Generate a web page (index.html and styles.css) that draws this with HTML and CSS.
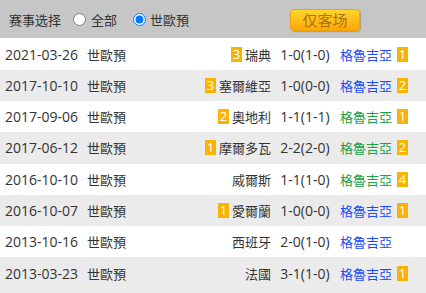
FILE: index.html
```html
<!DOCTYPE html>
<html lang="zh">
<head>
<meta charset="utf-8">
<link rel="stylesheet" href="styles.css">
</head>
<body>
<div class="bar">
  <span class="bar-label">赛事选择</span>
  <label class="opt"><input type="radio" name="m"><span>全部</span></label>
  <label class="opt opt2"><input type="radio" name="m" checked><span>世歐預</span></label>
  <button class="btn">仅客场</button>
</div>
<div class="list">
  <div class="row"><span class="date">2021-03-26</span><span class="comp">世歐預</span><span class="home"><i class="bd">3</i>瑞典</span><span class="score">1-0(1-0)</span><span class="away lose">格魯吉亞<i class="bd">1</i></span></div>
  <div class="row alt"><span class="date">2017-10-10</span><span class="comp">世歐預</span><span class="home"><i class="bd">3</i>塞爾維亞</span><span class="score">1-0(0-0)</span><span class="away lose">格魯吉亞<i class="bd">2</i></span></div>
  <div class="row"><span class="date">2017-09-06</span><span class="comp">世歐預</span><span class="home"><i class="bd">2</i>奧地利</span><span class="score">1-1(1-1)</span><span class="away draw">格魯吉亞<i class="bd">1</i></span></div>
  <div class="row alt"><span class="date">2017-06-12</span><span class="comp">世歐預</span><span class="home"><i class="bd">1</i>摩爾多瓦</span><span class="score">2-2(2-0)</span><span class="away draw">格魯吉亞<i class="bd">2</i></span></div>
  <div class="row"><span class="date">2016-10-10</span><span class="comp">世歐預</span><span class="home">威爾斯</span><span class="score">1-1(1-0)</span><span class="away draw">格魯吉亞<i class="bd">4</i></span></div>
  <div class="row alt"><span class="date">2016-10-07</span><span class="comp">世歐預</span><span class="home"><i class="bd">1</i>愛爾蘭</span><span class="score">1-0(0-0)</span><span class="away lose">格魯吉亞<i class="bd">1</i></span></div>
  <div class="row"><span class="date">2013-10-16</span><span class="comp">世歐預</span><span class="home">西班牙</span><span class="score">2-0(1-0)</span><span class="away lose">格魯吉亞</span></div>
  <div class="row alt last"><span class="date">2013-03-23</span><span class="comp">世歐預</span><span class="home">法國</span><span class="score">3-1(1-0)</span><span class="away lose">格魯吉亞<i class="bd">1</i></span></div>
</div>
</body>
</html>
```
FILE: styles.css
```css
html, body {
  margin: 0;
  padding: 0;
  background: #ffffff;
  overflow: hidden;
}
body {
  font-family: "Open Sans", "Noto Sans CJK TC", "Noto Sans CJK SC", sans-serif;
  font-size: 13px;
  color: #333333;
}
.bar {
  height: 38px;
  background: #c6c6c6;
  display: flex;
  align-items: center;
  padding-left: 9px;
  box-sizing: border-box;
}
.bar-label {
  font-size: 13px;
  margin-right: 6px;
}
.opt {
  display: flex;
  align-items: center;
  margin-left: 6px;
  margin-right: 2px;
}
.opt input {
  margin: 0 5px 0 0;
  width: 13px;
  height: 13px;
}
.opt2 {
  margin-left: 14px;
}
.opt2 input {
  margin-right: 4px;
}
.btn {
  margin-left: 99px;
  width: 70px;
  height: 22px;
  margin-top: 1px;
  border: 1px solid #f0a30a;
  border-radius: 4px;
  background: linear-gradient(#ffd62c, #ffa508);
  color: #a8760e;
  font-family: "Noto Sans CJK SC", sans-serif;
  font-size: 15px;
  line-height: 20px;
  padding: 0;
  box-shadow: 1px 1px 1px rgba(120, 90, 0, 0.35);
}
.list {
  display: flex;
  flex-direction: column;
}
.row {
  height: 31.2px;
  display: grid;
  grid-template-columns: 82px 80px 113px 60px auto;
  align-items: center;
  white-space: nowrap;
}
.row:first-child {
  height: 32px;
}
.row.last {
  height: 37px;
  align-items: start;
  padding-top: 7px;
  box-sizing: border-box;
}
.alt {
  background: #ebebeb;
}
.date {
  padding-left: 5px;
  font-size: 14px;
}
.comp {
  padding-left: 5px;
}
.home {
  text-align: right;
  padding-right: 4px;
  display: flex;
  justify-content: flex-end;
  align-items: center;
}
.score {
  text-align: center;
  font-size: 14px;
}
.away {
  padding-left: 5px;
  display: flex;
  align-items: center;
}
.lose { color: #1b4dff; }
.draw { color: #21a047; }
.bd {
  font-style: normal;
  display: inline-block;
  width: 11px;
  height: 15px;
  line-height: 15px;
  text-align: center;
  background: #f8b400;
  color: #ffffff;
  font-size: 13px;
  font-family: "Open Sans", sans-serif;
}
.home .bd { margin-right: 3px; }
.away .bd { margin-left: 5px; }
```
